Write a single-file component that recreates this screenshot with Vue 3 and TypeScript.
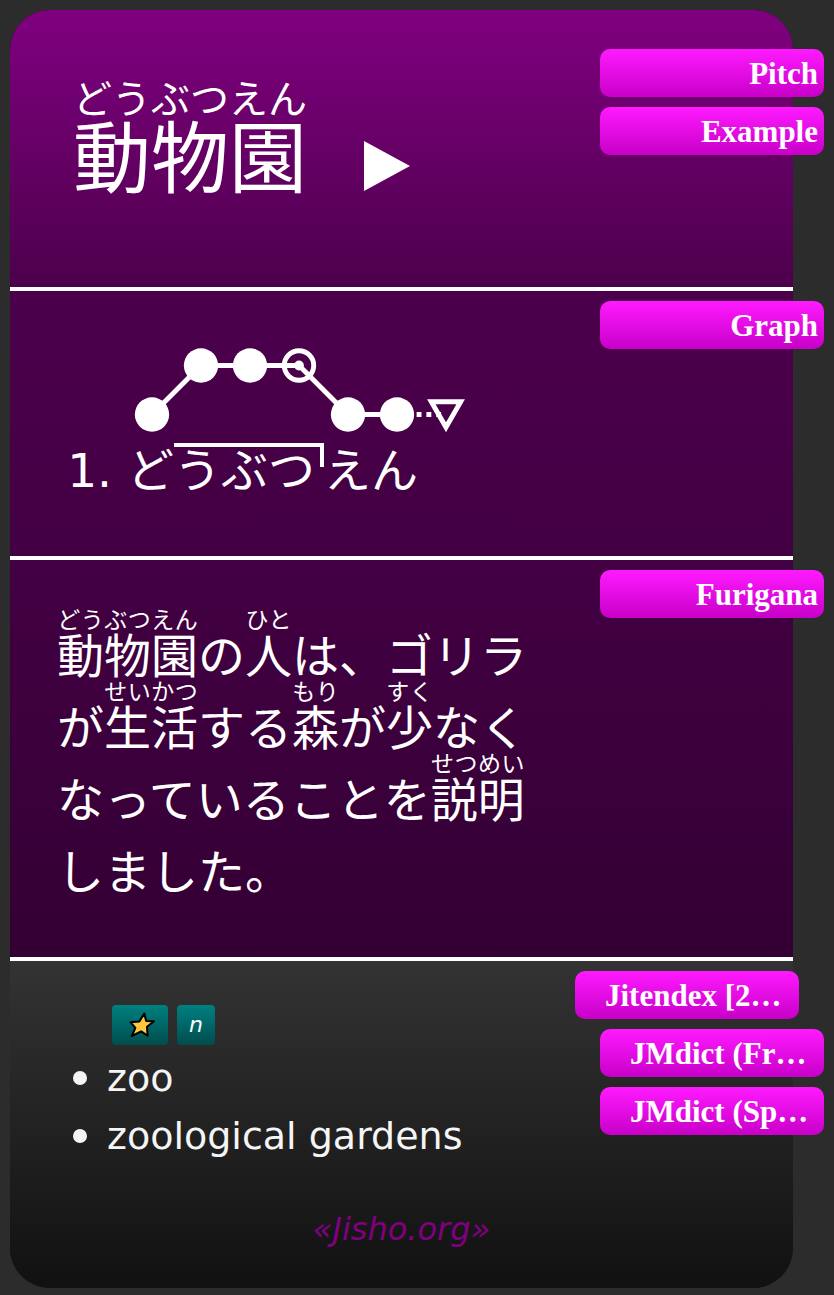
<script setup lang="ts">
interface Segment {
  text: string
  reading?: string
}

const sentence: Segment[] = [
  { text: '動物園', reading: 'どうぶつえん' },
  { text: 'の' },
  { text: '人', reading: 'ひと' },
  { text: 'は、ゴリラが' },
  { text: '生活', reading: 'せいかつ' },
  { text: 'する' },
  { text: '森', reading: 'もり' },
  { text: 'が' },
  { text: '少', reading: 'すく' },
  { text: 'なくなっていることを' },
  { text: '説明', reading: 'せつめい' },
  { text: 'しました。' },
]

const morae: { x: number; y: number }[] = [
  { x: 25, y: 75 },
  { x: 75, y: 25 },
  { x: 125, y: 25 },
  { x: 225, y: 75 },
  { x: 275, y: 75 },
]

const meanings: string[] = ['zoo', 'zoological gardens']
const dictionaries: string[] = ['Jitendex [2…', 'JMdict (Fr…', 'JMdict (Sp…']
</script>

<template>
  <main class="page">
    <article class="card">
      <header class="section word">
        <div class="content headline">
          <h1 lang="ja"><ruby>動物園<rt>どうぶつえん</rt></ruby></h1>
          <button class="play" type="button" aria-label="Play audio">
            <svg viewBox="0 0 46 50" aria-hidden="true"><path d="M0 0L46 25L0 50Z" fill="#fff" /></svg>
          </button>
        </div>
        <nav class="tags">
          <button class="tag" type="button">Pitch</button>
          <button class="tag" type="button">Example</button>
        </nav>
      </header>

      <section class="section pitch">
        <div class="content">
          <svg class="graph" viewBox="0 0 350 100" role="img" aria-label="Pitch accent graph">
            <g fill="none" stroke="#fff" stroke-width="5">
              <path d="M25 75L75 25L125 25L175 25L225 75L275 75" />
              <path d="M275 75L325 75" stroke-dasharray="5 5" />
              <circle cx="175" cy="25" r="15" />
              <path d="M325 88L340 62L310 62Z" />
            </g>
            <circle cx="175" cy="25" r="5" fill="#fff" />
            <circle v-for="m in morae" :key="m.x" :cx="m.x" :cy="m.y" r="17.5" fill="#fff" />
          </svg>
          <ol class="accents">
            <li><span lang="ja" class="kana">ど<span class="high">うぶつ</span>えん</span></li>
          </ol>
        </div>
        <nav class="tags">
          <button class="tag" type="button">Graph</button>
        </nav>
      </section>

      <section class="section example">
        <div class="content">
          <p class="sentence" lang="ja"><template v-for="(s, i) in sentence" :key="i"><ruby v-if="s.reading">{{ s.text }}<rt>{{ s.reading }}</rt></ruby><template v-else>{{ s.text }}</template></template></p>
        </div>
        <nav class="tags">
          <button class="tag" type="button">Furigana</button>
        </nav>
      </section>

      <section class="section glossary">
        <div class="content">
          <div class="chips">
            <span class="chip star">
              <svg viewBox="0 0 26 26" role="img" aria-label="Star">
                <path d="M15.2 1.6L17.2 9L25 9.2L18 14.8L18.6 23.8L12.2 19.4L2.8 24L6.4 15.8L1.4 10.2L10.4 9.4Z" fill="#ffc83d" stroke="#000" stroke-width="2" stroke-linejoin="round" />
              </svg>
            </span>
            <span class="chip">n</span>
          </div>
          <ul class="meanings">
            <li v-for="m in meanings" :key="m">{{ m }}</li>
          </ul>
        </div>
        <nav class="tags">
          <button
            v-for="(d, i) in dictionaries"
            :key="d"
            class="tag long"
            :class="{ active: i === 0 }"
            type="button"
          >{{ d }}</button>
        </nav>
        <footer class="source"><a href="#jisho">«Jisho.org»</a></footer>
      </section>
    </article>
  </main>
</template>

<style>
html,
body {
  margin: 0;
  background: #2c2c2c;
}
</style>

<style scoped>
.page {
  box-sizing: border-box;
  padding: 10px 41px 7px 10px;
  background: #2c2c2c;
  color: #fff;
  font-family: "DejaVu Sans", "Noto Sans CJK JP", sans-serif;
}

.card {
  border-radius: 40px;
  background: #330033;
}

.section {
  display: flex;
  flex-wrap: wrap;
  align-items: flex-start;
  box-sizing: border-box;
}

.section + .section {
  border-top: 4px solid #fff;
}

.content {
  flex: 1;
  min-width: 0;
}

.word {
  min-height: 277px;
  padding-top: 39px;
  border-radius: 40px 40px 0 0;
  background: linear-gradient(#800080, #4c004c);
}

.headline {
  display: flex;
  align-items: flex-end;
  gap: 57px;
  padding: 29px 0 0 63px;
}

h1 {
  margin: 0;
  font: 400 78px/80px "Noto Sans CJK JP", sans-serif;
}

h1 rt {
  font-size: 39px;
  line-height: 38px;
}

.play {
  width: 46px;
  height: 50px;
  margin-bottom: 2px;
  padding: 0;
  border: 0;
  background: none;
}

.play svg {
  display: block;
  width: 46px;
  height: 50px;
}

.tags {
  display: flex;
  flex-direction: column;
  gap: 10px;
  width: 224px;
  margin-right: -31px;
}

.tag {
  height: 48px;
  padding: 2px 6px 0;
  border: 0;
  border-radius: 10px;
  background: linear-gradient(#ff1aff, #c800c8);
  color: #fff;
  font: bold 31px/46px "Liberation Serif", serif;
  text-align: right;
  white-space: nowrap;
}

.tag.long {
  padding-left: 30px;
  text-align: left;
}

.tag.active {
  margin: 0 25px 0 -25px;
}

.pitch {
  min-height: 269px;
  padding-top: 10px;
  background: linear-gradient(#4c004c, #430043);
}

.pitch .content {
  padding: 40px 0 0 117px;
}

.graph {
  display: block;
  width: 344px;
  height: 98px;
}

.accents {
  margin: 0;
  padding: 0;
  font-size: 47px;
  line-height: 56px;
}

.kana {
  font-family: "Noto Sans CJK JP", sans-serif;
}

.high {
  display: inline-block;
  position: relative;
  padding-right: 9px;
}

.high::before {
  content: "";
  position: absolute;
  top: 4px;
  left: 0;
  right: 0;
  height: 20px;
  border: solid #fff;
  border-width: 4px 4px 0 0;
}

.example {
  min-height: 401px;
  padding-top: 10px;
  background: linear-gradient(#430043, #330033);
}

.example .content {
  padding: 37px 0 0 47px;
}

.sentence {
  max-width: 480px;
  margin: 0;
  font: 400 47px/72px "Noto Sans CJK JP", sans-serif;
}

.sentence rt {
  font-size: 23px;
  line-height: 24px;
}

.glossary {
  min-height: 331px;
  padding-top: 10px;
  border-radius: 0 0 40px 40px;
  background: linear-gradient(#333, #111);
}

.section.glossary {
  border-radius: 0 0 40px 40px;
}

.glossary .content {
  padding: 34px 0 0 97px;
  color: #f5f5f5;
}

.chips {
  display: flex;
  gap: 9px;
  padding-left: 5px;
}

.chip {
  padding: 0 12px;
  border-radius: 4px;
  background: linear-gradient(#008080, #004d4d);
  color: #fff;
  font-size: 22px;
  font-style: italic;
  line-height: 40px;
}

.star {
  display: flex;
  align-items: center;
  padding: 0 13px 0 17px;
}

.star svg {
  width: 26px;
  height: 26px;
}

.meanings {
  margin: 4px 0 0;
  padding: 0;
  font-size: 38px;
  line-height: 58px;
  list-style: none;
}

.meanings li {
  display: flex;
  align-items: center;
}

.meanings li::before {
  content: "";
  width: 14px;
  height: 14px;
  margin: 0 20px 0 -34px;
  border-radius: 50%;
  background: #f5f5f5;
}

.source {
  width: 100%;
  padding: 36px 0 32px;
  font-size: 32px;
  line-height: 40px;
  text-align: center;
}

.source a {
  color: #800080;
  font-style: italic;
  text-decoration: none;
}
</style>
